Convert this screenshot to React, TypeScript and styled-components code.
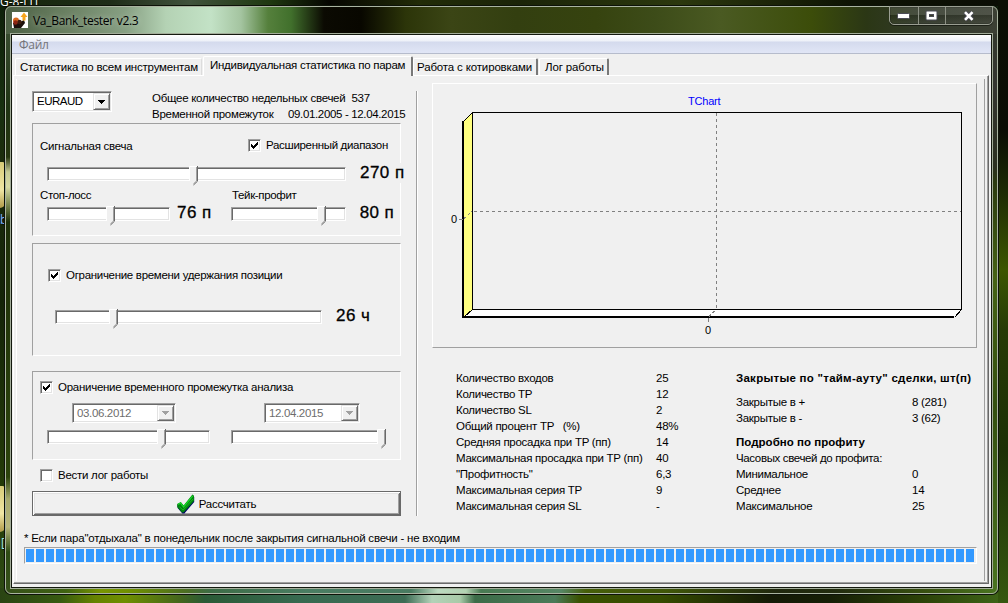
import React from 'react';
import styled, { createGlobalStyle, css } from 'styled-components';

const Global = createGlobalStyle`
  * { box-sizing: border-box; }
  body { margin: 0; overflow: hidden; }
`;

const face = '#f0f0f0';
const shadow = '#a0a0a0';
const dark = '#696969';

const Desktop = styled.div`
  position: relative;
  width: 1008px;
  height: 603px;
  padding: 6px 0 0 5px;
  overflow: hidden;
  background:
    linear-gradient(180deg, #0b0f04 0, #0a0c04 130px, #1c2a04 190px, #3c5600 270px, #263a06 330px, #1c3006 450px, #35570f 603px) 998px 0 / 10px 603px no-repeat,
    linear-gradient(90deg, #16260a 0, #1e2c18 110px, #40523c 190px, #1f3810 270px, #050500 330px, #222c08 420px, #1b2408 520px, #2c380e 680px, #0e1404 850px, #0a0c04 1008px) 0 0 / 1008px 6px no-repeat,
    linear-gradient(90deg, #2a4413 0, #375a10 60px, #668300 95px, #6f8f00 125px, #44661c 180px, #2a5a36 205px, #376a50 300px, #3c6c54 405px, #b2d2b8 432px, #a8caa8 460px, #3c6c48 475px, #4a7a58 555px, #3a5200 580px, #364c00 660px, #141a06 770px, #161f06 830px, #2c4208 920px, #3f6718 1008px) 0 588px / 1008px 15px no-repeat,
    linear-gradient(180deg, #0e200a 0, #183010 110px, #1c2c0c 160px, #142408 300px, #233a08 480px, #2f4c14 603px);
`;

const DesktopCaption = styled.span<{ $x: number; $y: number; $c?: string }>`
  position: absolute;
  left: ${p => p.$x}px;
  top: ${p => p.$y}px;
  font: 12px/12px 'Open Sans', sans-serif;
  color: ${p => p.$c || '#fff'};
  text-shadow: 1px 1px 1px #000;
  white-space: nowrap;
`;

const DesktopFolder = styled.div<{ $y: number }>`
  position: absolute;
  left: 0;
  top: ${p => p.$y}px;
  width: 5px;
  height: 46px;
  border-radius: 0 3px 6px 0;
  background: linear-gradient(180deg, #d8cc78, #f0e6a4 60%, #b09a48);
`;

const Window = styled.div`
  position: relative;
  width: 993px;
  height: 588px;
  padding: 0 4px 4px;
  border: 1px solid #a9b3a0;
  border-radius: 6px;
  box-shadow: 0 0 0 1px #0d1208;
  background:
    linear-gradient(90deg, #4c6044 0, #6a8062 60px, #87a083 120px, #b4d2b4 160px, #c3e2c6 205px, #a4c4a0 235px, #55803c 262px, #41702c 285px, #0b0a02 318px, #080700 355px, #2c3509 400px, #3b4515 445px, #333f10 510px, #36430f 590px, #3d4c19 650px, #4a5a22 715px, #3c4d0a 805px, #2b3715 860px, #333a2c 920px, #3c4034 991px) 0 0 / 991px 27px no-repeat,
    linear-gradient(90deg, #36501a 0, #3f6211 60px, #789500 95px, #6f8f00 125px, #4c6e22 180px, #3d6c46 205px, #4a7d62 300px, #487a60 405px, #bcdac0 432px, #b2d2b2 460px, #487a52 475px, #568664 555px, #465e08 580px, #405608 660px, #20280e 770px, #222c0e 830px, #385010 920px, #4a7420 991px) 0 100% / 991px 5px no-repeat,
    linear-gradient(180deg, #333a2c 0, #343630 80px, #2b3020 160px, #2b3a10 175px, #466314 270px, #34500f 400px, #4a7420 586px) 100% 0 / 5px 100% no-repeat,
    linear-gradient(180deg, #41553a 0, #203414 100px, #26360f 150px, #c6cb94 165px, #d8dba4 180px, #7c8a52 197px, #1e3009 215px, #2c440c 470px, #a6aa6c 492px, #b8b87c 520px, #2f4c14 545px, #36501a 586px);
`;

const TitleBar = styled.div`
  display: flex;
  align-items: flex-start;
  justify-content: space-between;
  height: 26px;
`;

const TitleCaption = styled.div`
  display: flex;
  gap: 5px;
  padding: 5px 0 0 2px;
`;

const TitleText = styled.span`
  font: 12px/17px 'Open Sans', sans-serif;
  letter-spacing: -0.3px;
  color: #000;
  text-shadow: 0 0 6px rgba(255, 255, 255, 0.5);
`;

const CaptionButtons = styled.div`
  display: flex;
  height: 19px;
  margin-top: -1px;
  border: 1px solid #9a9e92;
  border-radius: 0 0 5px 5px;
  box-shadow: 0 1px 0 rgba(10, 14, 6, 0.6), inset 0 0 0 1px rgba(20, 24, 16, 0.35);
  overflow: hidden;
`;

const CaptionButton = styled.div<{ $w: number }>`
  display: flex;
  align-items: center;
  justify-content: center;
  width: ${p => p.$w}px;
  background: linear-gradient(180deg, rgba(255, 255, 255, 0.1) 0 45%, rgba(0, 0, 0, 0.1) 50%, rgba(255, 255, 255, 0.05));
  & + & { border-left: 1px solid #8c9084; }
`;

const ClientFrame = styled.div`
  width: 983px;
  height: 556px;
  border: 1px solid #a3ad9a;
`;

const Client = styled.div`
  display: flex;
  flex-direction: column;
  width: 981px;
  height: 554px;
  border: 1px solid #14190f;
  background: ${face};
  overflow: hidden;
`;

const MenuBar = styled.div`
  display: flex;
  flex: none;
  height: 19px;
  padding-left: 7px;
  border-bottom: 1px solid #b6bccc;
  background: linear-gradient(180deg, #fff 0, #edf0f8 6px, #d4daed 7px, #e1e6f6 18px);
`;

const MenuItem = styled.span`
  font: 12px/19px 'Open Sans', sans-serif;
  letter-spacing: -0.3px;
  color: #747478;
`;

const Text = styled.span<{ $ls?: number; $bold?: boolean; $dim?: boolean; $w?: number; $mt?: number }>`
  display: block;
  flex: none;
  font: 11.5px/16px 'Liberation Sans', Arial, sans-serif;
  letter-spacing: ${p => p.$ls ?? -0.27}px;
  color: ${p => (p.$dim ? '#6d6d6d' : '#000')};
  white-space: pre;
  ${p => p.$bold && css`font-weight: bold;`}
  ${p => p.$w !== undefined && css`width: ${p.$w}px;`}
  ${p => p.$mt !== undefined && css`margin-top: ${p.$mt}px;`}
`;

const TabStrip = styled.div`
  display: flex;
  align-items: flex-end;
  flex: none;
  height: 21px;
  padding-left: 3px;
`;

const Tab = styled.div<{ $w: number; $active?: boolean; $soft?: boolean; $pad?: number; $ml?: number }>`
  width: ${p => p.$w}px;
  height: ${p => (p.$active ? 20 : 17)}px;
  margin-left: ${p => p.$ml ?? 0}px;
  padding-left: ${p => p.$pad ?? 4}px;
  border-top: 1px solid #fff;
  border-left: 1px solid #fff;
  border-right: ${p => (p.$soft ? '1px solid #dcdcdc' : '2px solid #787878')};
  border-radius: 2px 2px 0 0;
  background: ${face};
  ${p => p.$active && css`margin-bottom: -1px; z-index: 1;`}
`;

const Page = styled.div`
  width: 976px;
  height: 509px;
  margin-left: 1px;
  border: 1px solid #fff;
  border-right: 1px solid ${dark};
  border-bottom: 1px solid ${dark};
  box-shadow: inset -1px -1px 0 ${shadow};
`;

const Sheet = styled.div`
  width: 969px;
  height: 502px;
  margin: 3px 0 0 2px;
  border-left: 1px solid #fff;
  border-right: 1px solid ${shadow};
`;

const Columns = styled.div`
  display: flex;
  height: 437px;
`;

const LeftColumn = styled.div`
  display: flex;
  flex-direction: column;
  width: 384px;
  padding: 11px 0 0 15px;
`;

const Divider = styled.div`
  width: 2px;
  height: 425px;
  margin: 12px 14px 0 15px;
  border-left: 1px solid ${shadow};
  border-right: 1px solid #fff;
`;

const RightColumn = styled.div`
  width: 545px;
  padding-top: 4px;
`;

const Row = styled.div<{ $x?: number; $mt?: number; $gap?: number; $h?: number }>`
  display: flex;
  flex: none;
  align-items: flex-start;
  gap: ${p => p.$gap ?? 0}px;
  padding-left: ${p => p.$x ?? 0}px;
  margin-top: ${p => p.$mt ?? 0}px;
  ${p => p.$h !== undefined && css`height: ${p.$h}px;`}
`;

const Panel = styled.div<{ $h: number; $mt?: number }>`
  flex: none;
  width: 369px;
  height: ${p => p.$h}px;
  margin-top: ${p => p.$mt ?? 0}px;
  border: 1px solid;
  border-color: ${shadow} #fff #fff ${shadow};
`;

const Field = styled.div<{ $w: number; $h: number; $mt?: number }>`
  display: flex;
  flex: none;
  justify-content: space-between;
  width: ${p => p.$w}px;
  height: ${p => p.$h}px;
  margin-top: ${p => p.$mt ?? 0}px;
  padding-left: 4px;
  border: 1px solid;
  border-color: ${shadow} #fff #fff ${shadow};
  box-shadow: inset 1px 1px 0 ${dark}, inset -1px -1px 0 #e3e3e3;
  background: #fff;
`;

const DropButton = styled.div`
  display: flex;
  align-items: center;
  justify-content: center;
  width: 17px;
  margin: 1px;
  border: 1px solid;
  border-color: #e3e3e3 ${dark} ${dark} #e3e3e3;
  box-shadow: inset 1px 1px 0 #fff, inset -1px -1px 0 ${shadow};
  background: ${face};
`;

const Box = styled.div`
  flex: none;
  width: 13px;
  height: 13px;
  margin-top: 2px;
  border: 1px solid;
  border-color: ${shadow} #fff #fff ${shadow};
  box-shadow: inset 1px 1px 0 ${dark}, inset -1px -1px 0 #e3e3e3;
  background: #fff;
  svg { display: block; }
`;

const SliderBox = styled.div<{ $w: number }>`
  position: relative;
  flex: none;
  width: ${p => p.$w}px;
  height: 20px;
  padding-top: 1px;
`;

const Track = styled.div`
  height: 14px;
  border: 1px solid;
  border-color: ${shadow} #fff #fff ${shadow};
  box-shadow: inset 1px 1px 0 ${dark}, inset -1px -1px 0 #e3e3e3;
  background: #fff;
`;

const Thumb = styled.svg`
  position: absolute;
  top: 0;
`;

const Value = styled.span`
  flex: none;
  font: 17px/20px 'Liberation Sans', Arial, sans-serif;
  letter-spacing: 0.45px;
  -webkit-text-stroke: 0.3px #000;
  color: #000;
  background: ${face};
  white-space: pre;
`;

const Button = styled.button`
  display: flex;
  flex: none;
  align-items: center;
  justify-content: center;
  gap: 4px;
  width: 369px;
  height: 25px;
  margin-top: 8px;
  padding: 0;
  border: 1px solid ${dark};
  box-shadow: inset 1px 1px 0 #fff, inset -1px -1px 0 ${dark}, inset 2px 2px 0 #e3e3e3, inset -2px -2px 0 ${shadow};
  background: ${face};
`;

const ChartPanel = styled.div`
  width: 545px;
  height: 265px;
  border: 1px solid;
  border-color: #fff ${shadow} ${shadow} #fff;
  svg { display: block; }
  text { font: 11px 'Liberation Sans', Arial, sans-serif; }
`;

const Stats = styled.div`
  display: flex;
  padding: 22px 0 0 24px;
`;

const StatColumn = styled.div<{ $w?: number }>`
  flex: none;
  width: ${p => p.$w ?? 260}px;
`;

const Footer = styled.div`
  padding: 14px 0 0 7px;
`;

const Progress = styled.div`
  width: 953px;
  height: 17px;
  margin-top: 1px;
  padding: 1px;
  border: 1px solid;
  border-color: ${shadow} #fff #fff ${shadow};
`;

const ProgressBlocks = styled.div`
  width: 948px;
  height: 13px;
  background: repeating-linear-gradient(90deg, #3399ff 0 8px, transparent 8px 10px);
`;

const Slider = ({ w, at }: { w: number; at: number }) => (
  <SliderBox $w={w}>
    <Track />
    <Thumb style={{ left: at }} width="9" height="20" viewBox="0 0 9 20">
      <path d="M0 0h9v15l-4 4h-1l-4-4z" fill={face} />
      <path d="M0.5 15V0.5H8" fill="none" stroke="#fff" />
      <path d="M7.5 1v14L4.3 18" fill="none" stroke={shadow} />
      <path d="M8.5 0v15.2L4.5 19" fill="none" stroke={dark} />
    </Thumb>
  </SliderBox>
);

const Check = ({ on, label, ls }: { on?: boolean; label: string; ls?: number }) => (
  <>
    <Box>
      {on && (
        <svg width="11" height="11" viewBox="0 0 11 11" shapeRendering="crispEdges">
          <path d="M2 4h1v1h1v1h1v-1h1v-1h1v-1h1v-1h1v3h-1v1h-1v1h-1v1h-1v1h-1v-1h-1v-1h-1z" fill="#000" />
        </svg>
      )}
    </Box>
    <Text $ls={ls}>{label}</Text>
  </>
);

const Drop = ({ dim }: { dim?: boolean }) => (
  <DropButton>
    <svg width="7" height="4" viewBox="0 0 7 4" shapeRendering="crispEdges">
      <path d="M0 0h7v1h-1v1h-1v1h-1v1h-1v-1h-1v-1h-1v-1h-1z" fill={dim ? shadow : '#000'} />
    </svg>
  </DropButton>
);

const AppIcon = () => (
  <svg width="16" height="16" viewBox="0 0 16 16">
    <rect width="16" height="16" fill="#fff" />
    <path d="M1 11l5 0 6-3 1 3-4 5H2z" fill="#1c100c" />
    <circle cx="4" cy="8.5" r="3" fill="#d86a20" />
    <circle cx="3.5" cy="10.5" r="2.2" fill="#8c2412" />
    <circle cx="7.5" cy="10" r="2.2" fill="#3c1c10" />
    <path d="M12 0.5L15.5 5h-2v3.5h-3V5h-2z" fill="#f8a51c" />
  </svg>
);

const GreenTick = () => (
  <svg width="18" height="20" viewBox="0 0 18 20">
    <path d="M0.6 11L4.4 9l2.6 3.2L16 1.5l1.2 1.4v5L7.4 19.4H5.4L0.6 14z" fill="#000068" />
    <path d="M0.2 10L3.8 8l2.8 3.4L15.4 0.5l1.6 1.2v5.4L6.6 18.6H5L0.2 13z" fill="#008410" />
    <path d="M1 10.4L3.6 9l3 4L15.8 1.8" fill="none" stroke="#18d828" strokeWidth="1.3" />
    <path d="M2.6 13l3.4 3L16.2 4.8" fill="none" stroke="#20b828" strokeWidth="0.9" />
  </svg>
);

const Chart = () => (
  <svg width="543" height="263" viewBox="433 84 543 263" shapeRendering="crispEdges">
    <path d="M463 121L472.5 112V309L463 318z" fill="#ffff80" />
    <path d="M472 309H961L954 317H464z" fill="#fff" />
    <path d="M472.5 309.5V112.5H961.5V309.5z" fill="none" stroke="#000" />
    <path d="M463.5 121.5L472.5 112.5M463.5 317.5L472.5 309.5M954.5 317.5L961.5 309.5" fill="none" stroke="#000" />
    <path d="M463 121V317H954" fill="none" stroke="#000" strokeWidth="2" />
    <path d="M716.5 113V309M474 211.5H961" fill="none" stroke="#808080" strokeDasharray="3 3" />
    <path d="M459 219.5H463M708.5 318V322" fill="none" stroke="#808080" />
    <path d="M464 218.5L472 211.5M709 316.5L716 309.5" fill="none" stroke="#808080" strokeDasharray="3 2" />
    <text x="688" y="105" fill="#0000ff" letterSpacing="-0.2">TChart</text>
    <text x="451" y="223">0</text>
    <text x="705" y="334">0</text>
  </svg>
);

const totals: [string, string][] = [
  ['Количество входов', '25'],
  ['Количество TP', '12'],
  ['Количество SL', '2'],
  ['Общий процент TP   (%)', '48%'],
  ['Средняя просадка при TP (пп)', '14'],
  ['Максимальная просадка при TP (пп)', '40'],
  ['"Профитность"', '6,3'],
  ['Максимальная серия TP', '9'],
  ['Максимальная серия SL', '-'],
];

const Stat = ({ label, value, w }: { label: string; value: string; w: number }) => (
  <Row>
    <Text $w={w}>{label}</Text>
    <Text>{value}</Text>
  </Row>
);

export default function App() {
  return (
    <Desktop>
      <Global />
      <DesktopCaption $x={0} $y={-4}>G-8-LП</DesktopCaption>
      <DesktopFolder $y={162} />
      <DesktopFolder $y={486} />
      <DesktopCaption $x={0} $y={214} $c="#7fb0ff">b</DesktopCaption>
      <DesktopCaption $x={1} $y={537} $c="#a8e8e8">[</DesktopCaption>
      <Window>
        <TitleBar>
          <TitleCaption>
            <AppIcon />
            <TitleText>Va_Bank_tester v2.3</TitleText>
          </TitleCaption>
          <CaptionButtons>
            <CaptionButton $w={28}>
              <svg width="14" height="6" viewBox="0 0 14 6"><rect x="0.5" y="0.5" width="12" height="5" rx="1" fill="#fff" stroke="#4a4a55" /></svg>
            </CaptionButton>
            <CaptionButton $w={27}>
              <svg width="14" height="11" viewBox="0 0 14 11">
                <rect x="1" y="1" width="11" height="9" rx="1" fill="#fff" stroke="#4a4a55" />
                <rect x="4.5" y="4.5" width="4" height="2" fill="#3a4028" stroke="#4a4a55" />
              </svg>
            </CaptionButton>
            <CaptionButton $w={47}>
              <svg width="14" height="12" viewBox="0 0 14 12">
                <path d="M3 2.2l7.5 7.6M10.5 2.2L3 9.8" stroke="#4a4a55" strokeWidth="4.2" />
                <path d="M3 2.2l7.5 7.6M10.5 2.2L3 9.8" stroke="#fff" strokeWidth="2.6" />
              </svg>
            </CaptionButton>
          </CaptionButtons>
        </TitleBar>
        <ClientFrame>
          <Client>
            <MenuBar><MenuItem>Файл</MenuItem></MenuBar>
            <TabStrip>
              <Tab $w={187} $soft><Text $ls={-0.21}>Статистика по всем инструментам</Text></Tab>
              <Tab $w={210} $active $ml={1} $pad={6}><Text $ls={-0.26}>Индивидуальная статистика по парам</Text></Tab>
              <Tab $w={125} $pad={3}><Text $ls={-0.15}>Работа с котировками</Text></Tab>
              <Tab $w={70} $ml={1} $pad={5}><Text $ls={-0.15}>Лог работы</Text></Tab>
            </TabStrip>
            <Page>
              <Sheet>
                <Columns>
                  <LeftColumn>
                    <Row $gap={40} $h={33}>
                      <Field $w={80} $h={21} $mt={1}><Text $ls={-0.5} $mt={1}>EURAUD</Text><Drop /></Field>
                      <div>
                        <Row $gap={6}><Text>Общее количество недельных свечей</Text><Text>537</Text></Row>
                        <Row><Text $w={136}>Временной промежуток</Text><Text $ls={-0.35}>09.01.2005 - 12.04.2015</Text></Row>
                      </div>
                    </Row>

                    <Panel $h={113}>
                      <Row $x={7} $mt={13}>
                        <Text $w={208} $mt={1}>Сигнальная свеча</Text>
                        <Row $gap={5} $h={16}><Check on label="Расширенный диапазон" ls={-0.32} /></Row>
                      </Row>
                      <Row $x={14} $mt={9} $h={20} $gap={14}>
                        <Row $mt={3}><Slider w={299} at={142} /></Row>
                        <Value>270 п</Value>
                      </Row>
                      <Row $x={7} $mt={4}>
                        <Text $w={192} $ls={-0.4}>Стоп-лосс</Text>
                        <Text $ls={-0.35}>Тейк-профит</Text>
                      </Row>
                      <Row $x={14} $h={20}>
                        <Row $mt={3}><Slider w={123} at={59} /></Row>
                        <Row $x={7} $h={20}><Value>76 п</Value></Row>
                        <Row $mt={3} $x={19}><Slider w={115} at={86} /></Row>
                        <Row $x={14} $h={20}><Value>80 п</Value></Row>
                      </Row>
                    </Panel>

                    <Panel $h={113} $mt={7}>
                      <Row $x={15} $mt={23} $gap={5}>
                        <Check on label="Ограничение времени удержания позиции" ls={-0.3} />
                      </Row>
                      <Row $x={22} $mt={23} $h={20} $gap={14}>
                        <Row $mt={3}><Slider w={267} at={54} /></Row>
                        <Value>26 ч</Value>
                      </Row>
                    </Panel>

                    <Panel $h={89} $mt={15}>
                      <Row $x={7} $mt={7} $gap={5}>
                        <Check on label="Ораничение временного промежутка анализа" />
                      </Row>
                      <Row $x={39} $mt={8} $gap={88}>
                        <Field $w={104} $h={20}><Text $dim $ls={-0.35} $mt={1}>03.06.2012</Text><Drop dim /></Field>
                        <Field $w={96} $h={20}><Text $dim $ls={-0.35} $mt={1}>12.04.2015</Text><Drop dim /></Field>
                      </Row>
                      <Row $x={14} $mt={6} $gap={21}>
                        <Slider w={163} at={110} />
                        <Slider w={155} at={146} />
                      </Row>
                    </Panel>

                    <Row $x={8} $mt={7} $gap={5}><Check label="Вести лог работы" /></Row>
                    <Button><GreenTick /><Text>Рассчитать</Text></Button>
                  </LeftColumn>

                  <Divider />

                  <RightColumn>
                    <ChartPanel><Chart /></ChartPanel>
                    <Stats>
                      <StatColumn $w={280}>
                        {totals.map(([label, value]) => <Stat key={label} label={label} value={value} w={200} />)}
                      </StatColumn>
                      <StatColumn $w={240}>
                        <Text $bold $ls={0.26}>Закрытые по "тайм-ауту" сделки, шт(п)</Text>
                        <Row $mt={8}><Text $w={176}>Закрытые в +</Text><Text>8 (281)</Text></Row>
                        <Stat label="Закрытые в -" value="3 (62)" w={176} />
                        <Row $mt={8}><Text $bold $ls={0.03}>Подробно по профиту</Text></Row>
                        <Text $ls={-0.36}>Часовых свечей до профита:</Text>
                        <Stat label="Минимальное" value="0" w={176} />
                        <Stat label="Среднее" value="14" w={176} />
                        <Stat label="Максимальное" value="25" w={176} />
                      </StatColumn>
                    </Stats>
                  </RightColumn>
                </Columns>
                <Footer>
                  <Text $ls={-0.21}>* Если пара"отдыхала" в понедельник после закрытия сигнальной свечи - не входим</Text>
                  <Progress><ProgressBlocks /></Progress>
                </Footer>
              </Sheet>
            </Page>
          </Client>
        </ClientFrame>
      </Window>
    </Desktop>
  );
}
